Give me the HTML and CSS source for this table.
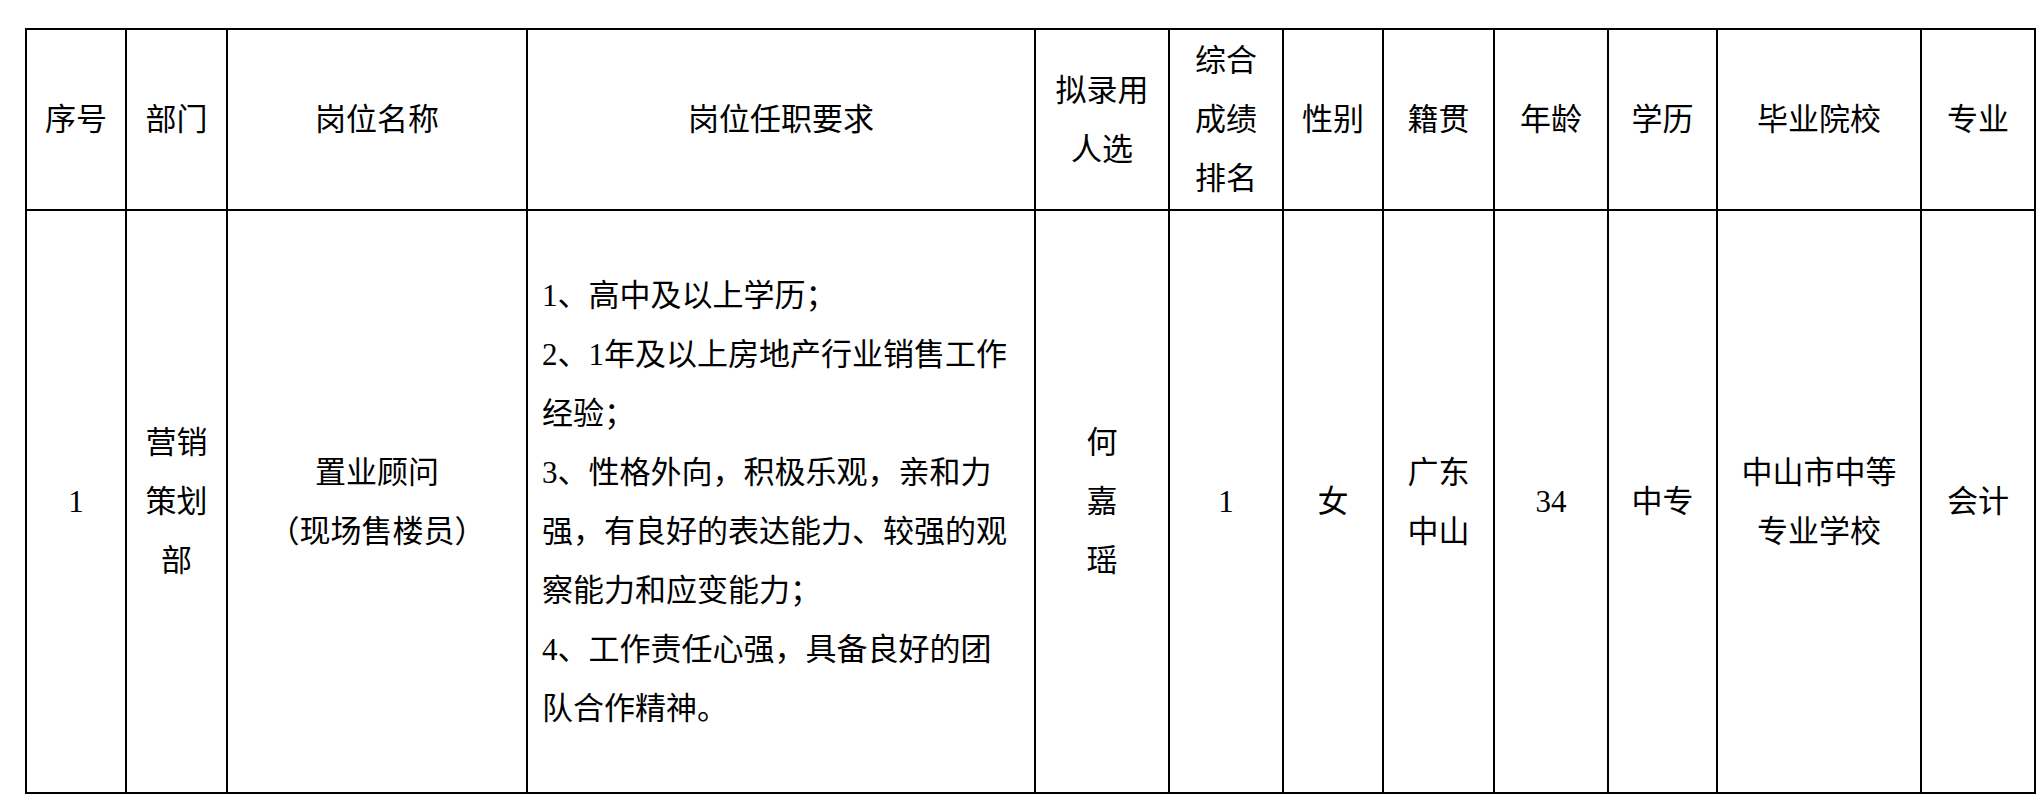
FILE: index.html
```html
<!DOCTYPE html>
<html lang="zh-CN">
<head>
<meta charset="utf-8">
<title>拟录用人选公示</title>
<link rel="stylesheet" href="styles.css">
</head>
<body>
<table class="roster">
  <colgroup>
    <col class="w-no"><col class="w-dept"><col class="w-title"><col class="w-req"><col class="w-name"><col class="w-rank"><col class="w-sex"><col class="w-origin"><col class="w-age"><col class="w-edu"><col class="w-school"><col class="w-major">
  </colgroup>
  <thead>
    <tr class="head-row">
      <th>序号</th>
      <th>部门</th>
      <th>岗位名称</th>
      <th>岗位任职要求</th>
      <th>拟录用人选</th>
      <th>综合成绩排名</th>
      <th>性别</th>
      <th>籍贯</th>
      <th>年龄</th>
      <th>学历</th>
      <th>毕业院校</th>
      <th>专业</th>
    </tr>
  </thead>
  <tbody>
    <tr class="body-row">
      <td>1</td>
      <td>营销策划部</td>
      <td>置业顾问<br>（现场售楼员）</td>
      <td class="req"><div class="req-text">1、高中及以上学历；<br>2、1年及以上房地产行业销售工作经验；<br>3、性格外向，积极乐观，亲和力强，有良好的表达能力、较强的观察能力和应变能力；<br>4、工作责任心强，具备良好的团队合作精神。</div></td>
      <td>何<br>嘉<br>瑶</td>
      <td>1</td>
      <td>女</td>
      <td>广东中山</td>
      <td>34</td>
      <td>中专</td>
      <td>中山市中等专业学校</td>
      <td>会计</td>
    </tr>
  </tbody>
</table>
</body>
</html>
```

FILE: styles.css
```css
html, body {
  margin: 0;
  padding: 0;
  background: #ffffff;
}

body {
  padding: 28px 0 0 25px;
  font-family: "Liberation Serif", "Noto Sans CJK SC", serif;
  font-size: 31px;
  line-height: 59px;
  color: #000000;
}

.roster {
  border-collapse: collapse;
  table-layout: fixed;
  width: 2011px;
}

.roster th,
.roster td {
  border: 2px solid #000000;
  padding: 0 11px;
  text-align: center;
  vertical-align: middle;
  font-weight: 400;
  word-break: break-all;
}

.head-row { height: 181px; }
.body-row { height: 583px; }

.roster td.req {
  text-align: left;
  padding: 0 10px 0 14px;
  word-break: normal;
}

.req-text {
  width: 472px;
}

.w-no { width: 100px; }
.w-dept { width: 101px; }
.w-title { width: 300px; }
.w-req { width: 508px; }
.w-name { width: 134px; }
.w-rank { width: 114px; }
.w-sex { width: 100px; }
.w-origin { width: 111px; }
.w-age { width: 114px; }
.w-edu { width: 109px; }
.w-school { width: 204px; }
.w-major { width: 114px; }
```
